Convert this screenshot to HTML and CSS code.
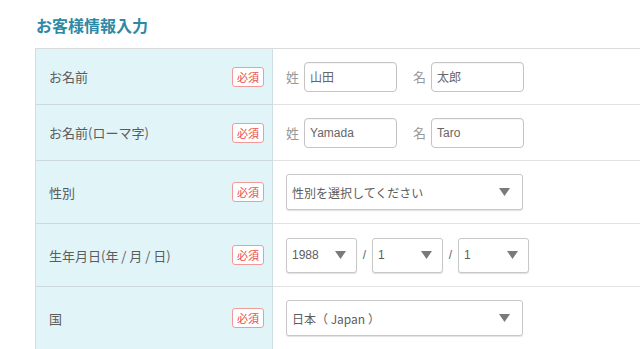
FILE: index.html
```html
<!DOCTYPE html>
<html lang="ja">
<head>
<meta charset="utf-8">
<link rel="stylesheet" href="styles.css">
</head>
<body>
<div class="page">
  <h1 class="title">お客様情報入力</h1>
  <div class="form">
    <div class="row row-short">
      <div class="label"><span class="label-text">お名前</span><span class="badge">必須</span></div>
      <div class="value">
        <span class="sub">姓</span><div class="input">山田</div>
        <span class="sub sub-gap">名</span><div class="input">太郎</div>
      </div>
    </div>
    <div class="row row-short">
      <div class="label"><span class="label-text">お名前(ローマ字)</span><span class="badge">必須</span></div>
      <div class="value">
        <span class="sub">姓</span><div class="input latin">Yamada</div>
        <span class="sub sub-gap">名</span><div class="input latin">Taro</div>
      </div>
    </div>
    <div class="row">
      <div class="label"><span class="label-text">性別</span><span class="badge">必須</span></div>
      <div class="value">
        <div class="select select-wide"><span>性別を選択してください</span><svg class="arrow" width="11" height="8" viewBox="0 0 11 8"><polygon points="0,0 11,0 5.5,8" fill="#7a7a7a"/></svg></div>
      </div>
    </div>
    <div class="row">
      <div class="label"><span class="label-text">生年月日(年 / 月 / 日)</span><span class="badge">必須</span></div>
      <div class="value">
        <div class="select select-date"><span class="latin">1988</span><svg class="arrow" width="11" height="8" viewBox="0 0 11 8"><polygon points="0,0 11,0 5.5,8" fill="#7a7a7a"/></svg></div>
        <span class="slash">/</span>
        <div class="select select-date"><span class="latin">1</span><svg class="arrow" width="11" height="8" viewBox="0 0 11 8"><polygon points="0,0 11,0 5.5,8" fill="#7a7a7a"/></svg></div>
        <span class="slash">/</span>
        <div class="select select-date"><span class="latin">1</span><svg class="arrow" width="11" height="8" viewBox="0 0 11 8"><polygon points="0,0 11,0 5.5,8" fill="#7a7a7a"/></svg></div>
      </div>
    </div>
    <div class="row">
      <div class="label"><span class="label-text">国</span><span class="badge">必須</span></div>
      <div class="value">
        <div class="select select-wide"><span>日本（ Japan ）</span><svg class="arrow" width="11" height="8" viewBox="0 0 11 8"><polygon points="0,0 11,0 5.5,8" fill="#7a7a7a"/></svg></div>
      </div>
    </div>
  </div>
</div>
</body>
</html>
```
FILE: styles.css
```css
html, body {
  margin: 0;
  padding: 0;
  background: #ffffff;
}
body {
  font-family: "Liberation Sans", "Noto Sans CJK JP", sans-serif;
  color: #5a5a5a;
  overflow: hidden;
}
.page {
  padding: 14px 0 0 35px;
}
.title {
  margin: 0 0 12px 1px;
  font-size: 16px;
  line-height: 22px;
  font-weight: bold;
  color: #2e89a6;
  font-family: "Noto Sans CJK JP", sans-serif;
}
.form {
  border-top: 1px solid #d8dcdd;
}
.row {
  display: grid;
  grid-template-columns: 238px 1fr;
  height: 63px;
}
.row-short {
  height: 56px;
}
.label {
  background: #e1f4f8;
  border-left: 1px solid #cfdfe3;
  border-right: 1px solid #cfdfe3;
  border-bottom: 1px solid #cdd9dc;
  display: flex;
  align-items: center;
  padding: 0 8px 0 13px;
}
.label-text {
  font-size: 13px;
  color: #5c5c5c;
  font-family: "Noto Sans CJK JP", sans-serif;
}
.badge {
  margin-left: auto;
  width: 30px;
  height: 18px;
  border: 1px solid #f29a9a;
  border-radius: 3px;
  background: #ffffff;
  color: #ea4a4e;
  font-size: 11px;
  line-height: 18px;
  text-align: center;
  font-family: "Noto Sans CJK JP", sans-serif;
}
.value {
  border-bottom: 1px solid #e2e2e2;
  display: flex;
  align-items: center;
  padding-left: 13px;
}
.sub {
  font-size: 13px;
  color: #999999;
  margin-right: 5px;
  font-family: "Noto Sans CJK JP", sans-serif;
}
.sub-gap {
  margin-left: 16px;
}
.input {
  box-sizing: border-box;
  width: 93px;
  height: 30px;
  border: 1px solid #c4c4c4;
  border-radius: 4px;
  padding-left: 5px;
  display: flex;
  align-items: center;
  font-size: 12px;
  color: #666;
  font-family: "Noto Sans CJK JP", sans-serif;
  box-shadow: inset 0 1px 1px rgba(0,0,0,0.04);
}
.latin {
  font-family: "Liberation Sans", sans-serif;
}
.select {
  box-sizing: border-box;
  height: 36px;
  border: 1px solid #c8c8c8;
  border-radius: 3px;
  background: #ffffff;
  display: flex;
  align-items: center;
  padding-left: 5px;
  font-size: 12px;
  color: #5c5c5c;
  font-family: "Noto Sans CJK JP", sans-serif;
  box-shadow: 0 1px 1px rgba(0,0,0,0.12);
}
.select-wide {
  width: 237px;
  padding-right: 12px;
}
.select-date {
  width: 71px;
  height: 35px;
  padding-right: 10px;
}
.arrow {
  margin-left: auto;
  display: block;
}
.slash {
  width: 15px;
  text-align: center;
  font-size: 12px;
  color: #666;
  font-family: "Liberation Sans", sans-serif;
}
```
